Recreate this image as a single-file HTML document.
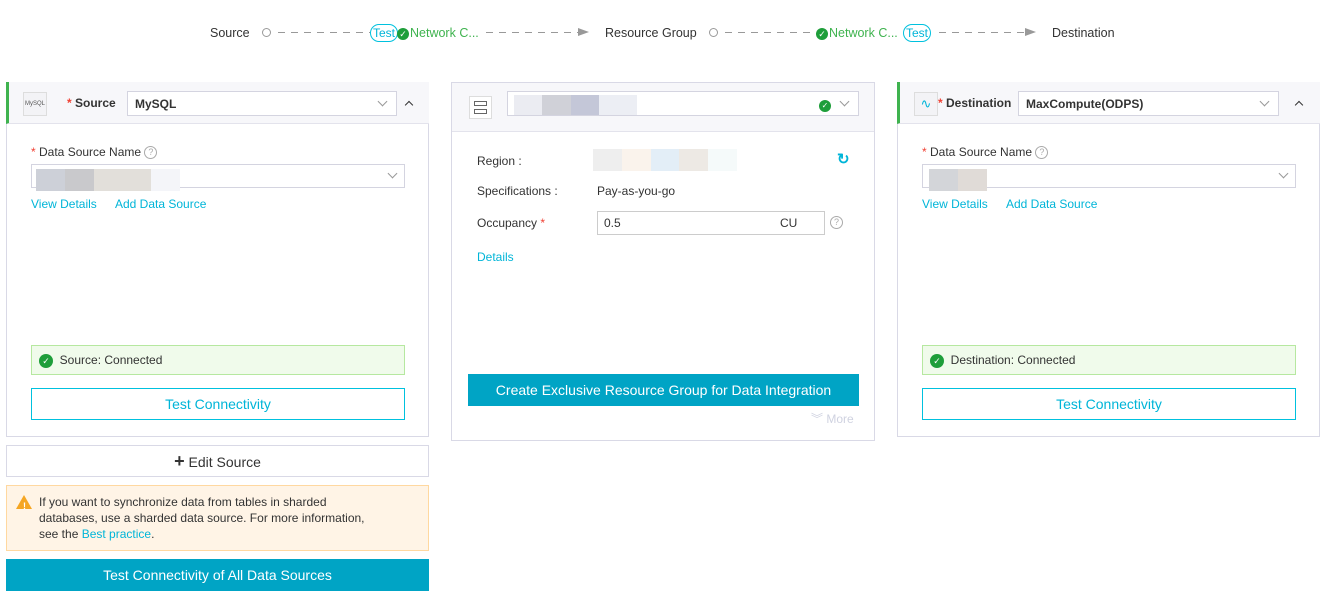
<!DOCTYPE html>
<html><head><meta charset="utf-8"><style>
*{box-sizing:border-box;margin:0;padding:0}
body{width:1332px;height:598px;background:#fff;font-family:"Liberation Sans",sans-serif;font-size:12px;color:#333;position:relative;overflow:hidden}
.a{position:absolute}
.card{position:absolute;border:1px solid #d9d9e6;background:#fff}
.hdr{position:absolute;left:0;right:0;top:0;background:#f7f7fa;border-bottom:1px solid #e3e3ec}
.sel{position:absolute;background:#fff;border:1px solid #d4d4e0;height:25px}
.caret{position:absolute;width:7px;height:7px;border-right:1.5px solid #999;border-bottom:1.5px solid #999;transform:rotate(45deg)}
.up{position:absolute;width:6px;height:6px;border-left:1.5px solid #333;border-top:1.5px solid #333;transform:rotate(45deg)}
.link{color:#00b5d8}
.req{color:#f04134}
.q{display:inline-block;width:13px;height:13px;border:1px solid #aaa;border-radius:50%;font-size:9px;color:#aaa;text-align:center;line-height:11px;vertical-align:middle}
.ok{display:inline-block;width:14px;height:14px;border-radius:50%;background:#1e9e3a;color:#fff;font-size:9px;text-align:center;line-height:14px}
.blur{position:absolute;height:22px}
.dash{position:absolute;top:32px;height:1px;background:repeating-linear-gradient(90deg,#999 0 7px,transparent 7px 13px)}
.pill{position:absolute;top:24px;height:18px;border:1px solid #00c1de;border-radius:9px;color:#00b5d8;font-size:12px;line-height:16px;padding:0 2px}
.arrow{position:absolute;top:28px;width:0;height:0;border-left:11px solid #999;border-top:4px solid transparent;border-bottom:4px solid transparent}
.circ{position:absolute;top:28px;width:9px;height:9px;border:1px solid #999;border-radius:50%;background:#fff}
</style></head><body>
<div class="a" style="left:210px;top:26px;font-size:12.5px">Source</div>
<div class="circ" style="left:262px"></div>
<div class="dash" style="left:278px;width:92px"></div>
<div class="pill" style="left:370px">Test</div>
<div class="a" style="left:397px;top:26px"><span class="ok" style="width:12px;height:12px;line-height:12px">✓</span></div>
<div class="a" style="left:410px;top:26px;color:#3fb34f;font-size:12.5px">Network C...</div>
<div class="dash" style="left:486px;width:92px"></div>
<div class="arrow" style="left:578px"></div>
<div class="a" style="left:605px;top:26px;font-size:12.5px">Resource Group</div>
<div class="circ" style="left:709px"></div>
<div class="dash" style="left:725px;width:91px"></div>
<div class="a" style="left:816px;top:26px"><span class="ok" style="width:12px;height:12px;line-height:12px">✓</span></div>
<div class="a" style="left:829px;top:26px;color:#3fb34f;font-size:12.5px">Network C...</div>
<div class="pill" style="left:903px">Test</div>
<div class="dash" style="left:939px;width:86px"></div>
<div class="arrow" style="left:1025px"></div>
<div class="a" style="left:1052px;top:26px;font-size:12.5px">Destination</div>

<div class="card" style="left:6px;top:82px;width:423px;height:355px">
 <div class="hdr" style="height:42px;border-left:3px solid #3fb34f;left:-1px;top:-1px;right:-1px"></div>
 <div class="a" style="left:16px;top:9px;width:24px;height:24px;border:1px solid #ddd;background:#f3f3f6;font-size:6px;text-align:center;line-height:22px;color:#555">MySQL</div>
 <div class="a" style="left:60px;top:13px;font-weight:bold"><span class="req">*</span> Source</div>
 <div class="sel" style="left:120px;top:8px;width:270px;font-weight:bold;padding:5px 0 0 7px">MySQL<div class="caret" style="right:10px;top:6px"></div></div>
 <div class="up" style="left:399px;top:19px"></div>
 <div class="a" style="left:24px;top:62px"><span class="req">*</span> Data Source Name <span class="q">?</span></div>
 <div class="sel" style="left:24px;top:81px;width:374px;height:24px"><div class="caret" style="right:8px;top:5px"></div>
  <div class="blur" style="left:4px;top:4px;width:29px;background:#cdd0d8"></div><div class="blur" style="left:33px;top:4px;width:29px;background:#c9c9cc"></div><div class="blur" style="left:62px;top:4px;width:57px;background:#e2dfda"></div><div class="blur" style="left:119px;top:4px;width:29px;background:#f4f5f9"></div></div>
 <div class="a link" style="left:24px;top:114px">View Details</div>
 <div class="a link" style="left:108px;top:114px">Add Data Source</div>
 <div class="a" style="left:24px;top:262px;width:374px;height:30px;background:#f0fbeb;border:1px solid #b6e8a0;padding:7px 0 0 7px"><span class="ok">✓</span>&nbsp; Source: Connected</div>
 <div class="a" style="left:24px;top:305px;width:374px;height:32px;border:1px solid #00c1de;color:#00b5d8;text-align:center;line-height:30px;font-size:14px">Test Connectivity</div>
</div>
<div class="a" style="left:6px;top:445px;width:423px;height:32px;border:1px solid #d9d9e6;text-align:center;line-height:30px;font-size:14px"><b style="font-size:18px">+</b> Edit Source</div>
<div class="a" style="left:6px;top:485px;width:423px;height:66px;background:#fff4e6;border:1px solid #ffd8a0;padding:8px 10px 0 32px;line-height:16px;font-size:12px">
 <div class="a" style="left:9px;top:9px;width:0;height:0;border-left:8px solid transparent;border-right:8px solid transparent;border-bottom:14px solid #f5a623"></div>
 <div class="a" style="left:16px;top:12px;color:#fff;font-size:9px;font-weight:bold">!</div>
 If you want to synchronize data from tables in sharded<br>databases, use a sharded data source. For more information,<br>see the <span class="link">Best practice</span>.</div>
<div class="a" style="left:6px;top:559px;width:423px;height:32px;background:#00a4c5;color:#fff;text-align:center;line-height:32px;font-size:14px">Test Connectivity of All Data Sources</div>

<div class="card" style="left:451px;top:82px;width:424px;height:359px">
 <div class="hdr" style="height:49px"></div>
 <div class="a" style="left:17px;top:13px;width:23px;height:23px;border:1px solid #ddd;background:#fff"><div class="a" style="left:4px;top:4px;width:13px;height:5px;border:1px solid #666"></div><div class="a" style="left:4px;top:12px;width:13px;height:5px;border:1px solid #666"></div></div>
 <div class="sel" style="left:55px;top:8px;width:352px">
  <div class="blur" style="left:6px;top:3px;width:28px;height:20px;background:#ebecf2"></div><div class="blur" style="left:34px;top:3px;width:29px;height:20px;background:#d0d1d8"></div><div class="blur" style="left:63px;top:3px;width:28px;height:20px;background:#c4c7d8"></div><div class="blur" style="left:91px;top:3px;width:38px;height:20px;background:#eceef4"></div>
  <div class="a" style="left:311px;top:5px"><span class="ok" style="width:12px;height:12px;line-height:12px;font-size:8px">✓</span></div>
  <div class="caret" style="right:10px;top:6px"></div></div>
 <div class="a" style="left:25px;top:71px">Region :</div>
 <div class="blur" style="left:141px;top:66px;width:29px;background:#eeeeee"></div><div class="blur" style="left:170px;top:66px;width:29px;background:#faf3ec"></div><div class="blur" style="left:199px;top:66px;width:28px;background:#e3eef7"></div><div class="blur" style="left:227px;top:66px;width:29px;background:#ede9e4"></div><div class="blur" style="left:256px;top:66px;width:29px;background:#f5fafa"></div>
 <div class="a link" style="left:385px;top:67px;font-size:15px;font-weight:bold">↻</div>
 <div class="a" style="left:25px;top:101px">Specifications :</div>
 <div class="a" style="left:145px;top:101px">Pay-as-you-go</div>
 <div class="a" style="left:25px;top:133px">Occupancy <span class="req">*</span></div>
 <div class="a" style="left:145px;top:128px;width:228px;height:24px;border:1px solid #ccc;padding:4px 0 0 6px">0.5<span class="a" style="left:182px;top:4px">CU</span></div>
 <div class="a" style="left:378px;top:132px"><span class="q">?</span></div>
 <div class="a link" style="left:25px;top:167px">Details</div>
 <div class="a" style="left:16px;top:291px;width:391px;height:32px;background:#00a4c5;color:#fff;text-align:center;line-height:32px;font-size:14px">Create Exclusive Resource Group for Data Integration</div>
 <div class="a" style="left:359px;top:327px;color:#cfd2e0;font-size:12px">︾ More</div>
</div>

<div class="card" style="left:897px;top:82px;width:423px;height:355px">
 <div class="hdr" style="height:42px;border-left:3px solid #3fb34f;left:-1px;top:-1px;right:-1px"></div>
 <div class="a" style="left:16px;top:9px;width:24px;height:24px;border:1px solid #ddd;background:#f3f3f6;color:#00b5d8;text-align:center;line-height:22px;font-size:13px">∿</div>
 <div class="a" style="left:40px;top:13px;font-weight:bold"><span class="req">*</span> Destination</div>
 <div class="sel" style="left:120px;top:8px;width:261px;font-weight:bold;padding:5px 0 0 7px">MaxCompute(ODPS)<div class="caret" style="right:10px;top:6px"></div></div>
 <div class="up" style="left:398px;top:19px"></div>
 <div class="a" style="left:24px;top:62px"><span class="req">*</span> Data Source Name <span class="q">?</span></div>
 <div class="sel" style="left:24px;top:81px;width:374px;height:24px"><div class="caret" style="right:8px;top:5px"></div>
  <div class="blur" style="left:6px;top:4px;width:29px;background:#d3d5d9"></div><div class="blur" style="left:35px;top:4px;width:29px;background:#e0dbd7"></div></div>
 <div class="a link" style="left:24px;top:114px">View Details</div>
 <div class="a link" style="left:108px;top:114px">Add Data Source</div>
 <div class="a" style="left:24px;top:262px;width:374px;height:30px;background:#f0fbeb;border:1px solid #b6e8a0;padding:7px 0 0 7px"><span class="ok">✓</span>&nbsp; Destination: Connected</div>
 <div class="a" style="left:24px;top:305px;width:374px;height:32px;border:1px solid #00c1de;color:#00b5d8;text-align:center;line-height:30px;font-size:14px">Test Connectivity</div>
</div>
</body></html>
